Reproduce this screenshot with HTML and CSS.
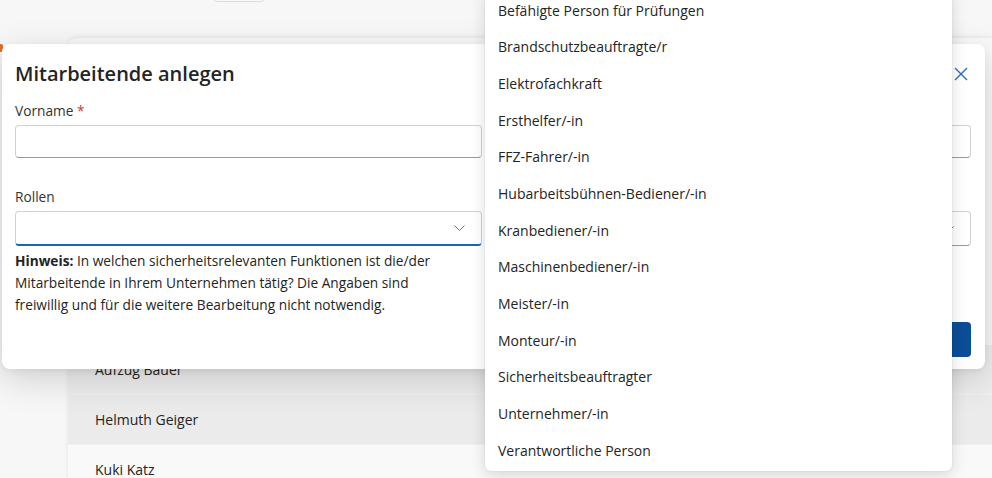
FILE: index.html
```html
<!DOCTYPE html>
<html lang="de">
<head>
  <meta charset="UTF-8">
  <meta name="viewport" content="width=device-width, initial-scale=1.0">
  <link rel="stylesheet" href="styles.css">
  <title>Mitarbeitende anlegen</title>
</head>
<body>
  <div class="page">
    <div class="toolbar">
      <button class="tool-btn"></button>
    </div>
    <div class="card">
      <div class="rows-hidden"></div>
      <div class="row shade">Aufzug Bauer</div>
      <div class="row hover">Helmuth Geiger</div>
      <div class="row">Kuki Katz</div>
    </div>
    <span class="avatar-peek"></span>
  </div>

  <div class="dialog">
    <div class="dialog-head">
      <h2>Mitarbeitende anlegen</h2>
      <button class="close" aria-label="Schließen">
        <svg width="14" height="14" viewBox="0 0 14 14"><path d="M1 1 L13 13 M13 1 L1 13" stroke="#2d6cc0" stroke-width="1.4" fill="none"/></svg>
      </button>
    </div>
    <div class="form">
      <div class="field">
        <label>Vorname <span class="req">*</span></label>
        <div class="input"></div>
      </div>
      <div class="field">
        <label aria-label="Nachname"></label>
        <div class="input"></div>
      </div>
      <div class="field">
        <label>Rollen</label>
        <div class="select focused">
          <svg width="11" height="6" viewBox="0 0 11 6"><path d="M0.5 0.5 L5.5 5.5 L10.5 0.5" stroke="#707070" stroke-width="1" fill="none"/></svg>
        </div>
        <p class="hint"><b>Hinweis:</b> In welchen sicherheitsrelevanten Funktionen ist die/der Mitarbeitende in Ihrem Unternehmen tätig? Die Angaben sind freiwillig und für die weitere Bearbeitung nicht notwendig.</p>
      </div>
      <div class="field">
        <label aria-label="Standort"></label>
        <div class="select">
          <svg width="11" height="6" viewBox="0 0 11 6"><path d="M0.5 0.5 L5.5 5.5 L10.5 0.5" stroke="#707070" stroke-width="1" fill="none"/></svg>
        </div>
      </div>
    </div>
    <div class="dialog-foot">
      <button class="primary" aria-label="Speichern"></button>
    </div>
  </div>

  <ul class="listbox">
    <li>Befähigte Person für Prüfungen</li>
    <li>Brandschutzbeauftragte/r</li>
    <li>Elektrofachkraft</li>
    <li>Ersthelfer/-in</li>
    <li>FFZ-Fahrer/-in</li>
    <li>Hubarbeitsbühnen-Bediener/-in</li>
    <li>Kranbediener/-in</li>
    <li>Maschinenbediener/-in</li>
    <li>Meister/-in</li>
    <li>Monteur/-in</li>
    <li>Sicherheitsbeauftragter</li>
    <li>Unternehmer/-in</li>
    <li>Verantwortliche Person</li>
  </ul>
</body>
</html>
```

FILE: styles.css
```css
html, body {
  width: 100%;
  height: 100%;
}

body {
  margin: 0;
  font-family: "Open Sans", "Noto Sans", sans-serif;
  font-size: 13px;
  color: #242424;
  background: #f7f7f7;
  overflow: hidden;
  position: relative;
}

button {
  font-family: inherit;
  font-size: inherit;
}

/* page behind the dialog */

.page {
  padding-left: 68px;
}

.toolbar {
  height: 37px;
  display: flex;
  align-items: flex-start;
}

.tool-btn {
  margin-left: 145px;
  margin-top: -30px;
  width: 52px;
  height: 32px;
  border: 1px solid #dcdcdc;
  border-radius: 4px;
  background: #fafafa;
}

.card {
  background: #f9f9f9;
  border-radius: 8px 0 0 0;
  padding-top: 7px;
  box-shadow: 0 0 4px rgba(0, 0, 0, 0.08);
  border-top: 1px solid #ececec;
}

.rows-hidden {
  height: 300px;
}

.row {
  height: 50px;
  display: flex;
  align-items: center;
  padding-left: 27px;
  font-size: 14px;
  border-bottom: 1px solid #f0f0f0;
  box-sizing: border-box;
}

.row.shade {
  background: #ededed;
}

.row.hover {
  background: #ebebeb;
}

.avatar-peek {
  position: absolute;
  left: 0;
  top: 44px;
  width: 3px;
  height: 8px;
  background: #e0712e;
  border-radius: 0 2px 2px 0;
}

/* dialog */

.dialog {
  position: absolute;
  left: 2px;
  top: 44px;
  width: 983px;
  height: 325px;
  box-sizing: border-box;
  padding: 16px 14px 12px 13px;
  background: #fff;
  border-radius: 8px;
  box-shadow: 0 10px 36px rgba(0, 0, 0, 0.16), 0 2px 6px rgba(0, 0, 0, 0.06);
  display: flex;
  flex-direction: column;
}

.dialog-head {
  display: flex;
  align-items: center;
  justify-content: space-between;
  height: 28px;
}

.dialog-head h2 {
  margin: 0;
  font-size: 20px;
  font-weight: 600;
  line-height: 28px;
}

.close {
  width: 22px;
  height: 22px;
  padding: 0;
  margin-right: -1px;
  border: none;
  background: none;
  display: flex;
  align-items: center;
  justify-content: center;
}

.form {
  margin-top: 13px;
  display: grid;
  grid-template-columns: 1fr 1fr;
  column-gap: 22px;
  row-gap: 29px;
  align-items: start;
}

.field {
  display: flex;
  flex-direction: column;
  row-gap: 4px;
}

.field label {
  height: 20px;
  font-size: 13.7px;
  line-height: 20px;
  color: #333;
}

.req {
  color: #d13438;
}

.input {
  height: 33px;
  box-sizing: border-box;
  border: 1px solid #d1d1d1;
  border-bottom-color: #9a9a9a;
  border-radius: 4px;
}

.select {
  height: 35px;
  box-sizing: border-box;
  border: 1px solid #d1d1d1;
  border-bottom-color: #9a9a9a;
  border-radius: 4px;
  display: flex;
  align-items: center;
  justify-content: flex-end;
  padding-right: 16px;
}

.select.focused {
  border-bottom: 2px solid #1a63b8;
}

.hint {
  margin: 0;
  max-width: 438px;
  font-size: 13.7px;
  line-height: 22px;
}

.dialog-foot {
  margin-top: auto;
  display: flex;
  justify-content: flex-end;
}

.primary {
  width: 96px;
  height: 35px;
  border: none;
  border-radius: 4px;
  background: #0a4e98;
}

/* open dropdown */

.listbox {
  position: absolute;
  left: 485px;
  top: -10px;
  width: 467px;
  margin: 0;
  padding: 2px 0;
  list-style: none;
  background: #fff;
  border-radius: 6px;
  box-shadow: 0 4px 16px rgba(0, 0, 0, 0.14), 0 0 2px rgba(0, 0, 0, 0.1);
}

.listbox li {
  height: 36.67px;
  display: flex;
  align-items: center;
  padding-left: 13px;
  font-size: 14px;
}
```
